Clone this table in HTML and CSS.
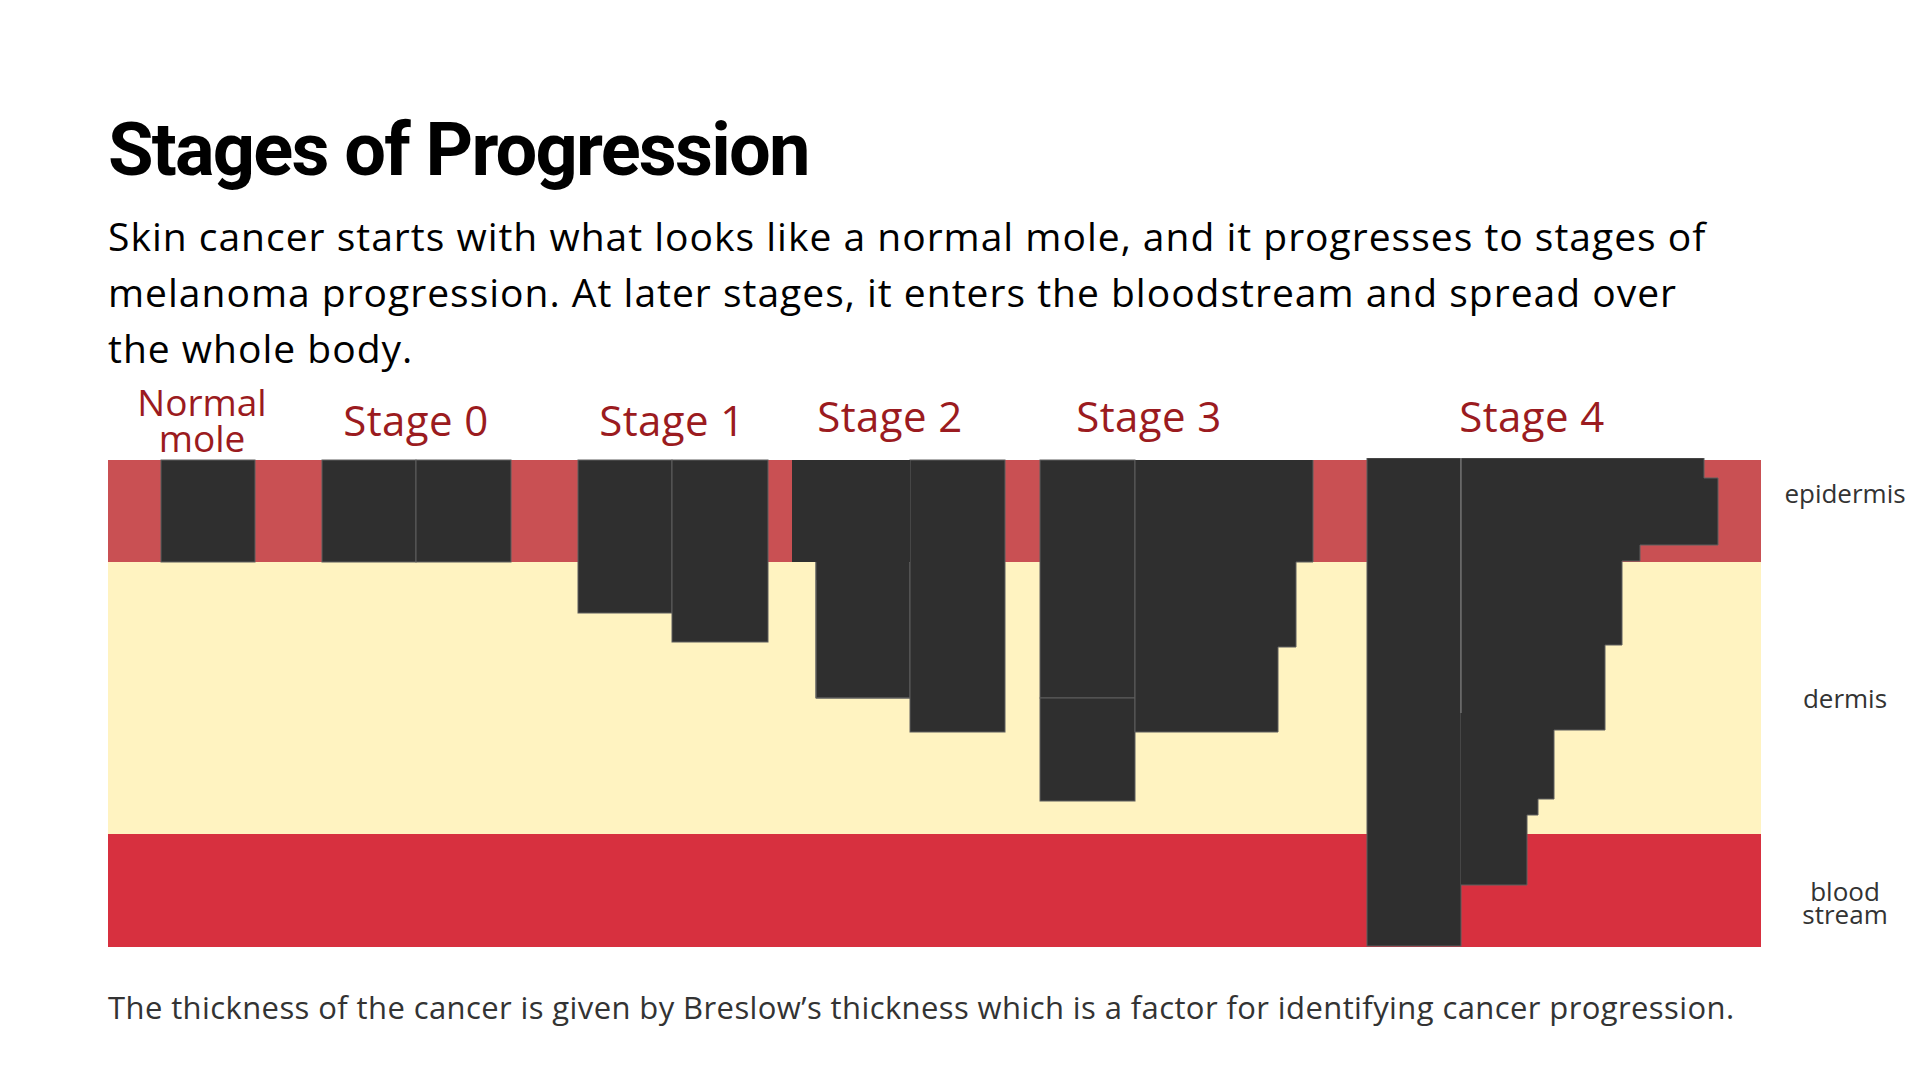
FILE: index.html
```html
<!DOCTYPE html>
<html lang="en">
<head>
<meta charset="utf-8">
<title>Stages of Progression</title>
<link rel="stylesheet" href="styles.css">
</head>
<body>
<main class="page">
  <h1 class="title">Stages of Progression</h1>
  <p class="intro">Skin cancer starts with what looks like a normal mole, and it progresses to stages of<br>melanoma progression. At later stages, it enters the bloodstream and spread over<br>the whole body.</p>

  <section class="figure">
    <div class="stage-labels">
      <div class="stage-label cell-normal">Normal<br>mole</div>
      <div class="stage-label cell-s0">Stage 0</div>
      <div class="stage-label cell-s1">Stage 1</div>
      <div class="stage-label cell-s2">Stage 2</div>
      <div class="stage-label cell-s3">Stage 3</div>
      <div class="stage-label cell-s4">Stage 4</div>
    </div>
    <div class="spacer"></div>

    <svg class="chart" width="1653" height="490" viewBox="108 458 1653 490" xmlns="http://www.w3.org/2000/svg">
      <rect x="108" y="460" width="1653" height="102" fill="#c95053"/>
      <rect x="108" y="562" width="1653" height="272" fill="#fff3c1"/>
      <rect x="108" y="834" width="1653" height="113" fill="#d7303f"/>

      <g fill="#2f2f2f" stroke="#5e5e5e" stroke-width="1">
        <rect x="161" y="460" width="94" height="102"/>
        <rect x="322" y="460" width="94" height="102"/>
        <rect x="416" y="460" width="95" height="102"/>
        <rect x="578" y="460" width="94" height="153"/>
        <rect x="672" y="460" width="96" height="182"/>
        <rect x="816" y="562" width="94" height="136"/>
        <rect x="910" y="460" width="95" height="272"/>
        <rect x="1040" y="460" width="95" height="238"/>
        <rect x="1040" y="698" width="95" height="103"/>
        <rect x="1367" y="458" width="94" height="488"/>
      </g>
      <g fill="#2f2f2f">
        <rect x="792" y="460" width="118" height="102"/>
        <rect x="816" y="540" width="93" height="40"/>
        <polygon points="1135,460 1313,460 1313,562 1296,562 1296,647 1278,647 1278,732 1135,732"/>
        <polygon points="1461,458 1704,458 1704,478 1718,478 1718,545 1640,545 1640,561 1622,561 1622,645 1605,645 1605,730 1554,730 1554,799 1538,799 1538,815 1527,815 1527,885 1461,885"/>
      </g>
      <g fill="none" stroke="#5e5e5e" stroke-width="1">
        <polyline points="1135,732 1278,732 1278,647 1296,647 1296,562 1313,562 1313,460"/>
        <polyline points="1461,885 1527,885 1527,815 1538,815 1538,799 1554,799 1554,730 1605,730 1605,645 1622,645 1622,561 1640,561 1640,545 1718,545 1718,478 1704,478 1704,458 1461,458"/>
        <line x1="1135" y1="460" x2="1135" y2="732"/>
        <line x1="816" y1="698" x2="910" y2="698"/>
        <line x1="816" y1="562" x2="816" y2="698"/>
      </g>
      <line x1="1461" y1="458" x2="1461" y2="713" stroke="#8a8a8a" stroke-width="1"/>
    </svg>

    <div class="layer-labels">
      <div class="layer layer-epi">epidermis</div>
      <div class="layer layer-derm">dermis</div>
      <div class="layer layer-blood">blood<br>stream</div>
    </div>
  </section>

  <p class="note">The thickness of the cancer is given by Breslow’s thickness which is a factor for identifying cancer progression.</p>
</main>
</body>
</html>
```

FILE: styles.css
```css
html, body {
  margin: 0;
  padding: 0;
  background: #ffffff;
}

body {
  font-family: "Open Sans", "Liberation Sans", sans-serif;
  color: #000;
  width: 1920px;
  height: 1080px;
  overflow: hidden;
}

.page {
  padding: 113px 0 0 108px;
  display: flex;
  flex-direction: column;
}

.title {
  margin: 0;
  font-family: Roboto, "Liberation Sans", sans-serif;
  font-size: 74px;
  line-height: 74px;
  font-weight: 700;
  letter-spacing: -1.8px;
  color: #000;
}

.intro {
  margin: 21px 0 0 0;
  font-size: 39px;
  line-height: 56px;
  font-weight: 400;
  letter-spacing: 1px;
  color: #000;
  white-space: nowrap;
}

.figure {
  margin-top: 8px;
  display: grid;
  grid-template-columns: 1653px 159px;
  grid-template-rows: auto 490px;
}

.stage-labels {
  display: flex;
  align-items: flex-end;
  color: #9b1b20;
  text-align: center;
}

.stage-label {
  font-size: 42px;
  line-height: 42px;
  letter-spacing: 0.4px;
  margin-bottom: 21px;
}

.cell-normal { width: 188px; font-size: 37px; line-height: 36px; letter-spacing: 0; margin-bottom: 2px; }
.cell-s0 { width: 240px; margin-bottom: 17px; }
.cell-s1 { width: 272px; margin-bottom: 17px; }
.cell-s2 { width: 164px; }
.cell-s3 { width: 354px; }
.cell-s4 { width: 412px; }

.chart {
  display: block;
}

.layer-labels {
  display: flex;
  flex-direction: column;
  padding-top: 2px;
  color: #333;
  font-size: 26px;
  line-height: 23px;
}

.layer {
  display: flex;
  align-items: center;
  justify-content: center;
  text-align: center;
  padding-left: 9px;
}

.layer-epi { height: 66px; padding-bottom: 36px; }
.layer-derm { height: 272px; }
.layer-blood { height: 86px; padding-top: 26px; }

.note {
  margin: 44px 0 0 0;
  font-size: 31px;
  line-height: 31px;
  letter-spacing: 0.4px;
  color: #333;
  white-space: nowrap;
}
```
